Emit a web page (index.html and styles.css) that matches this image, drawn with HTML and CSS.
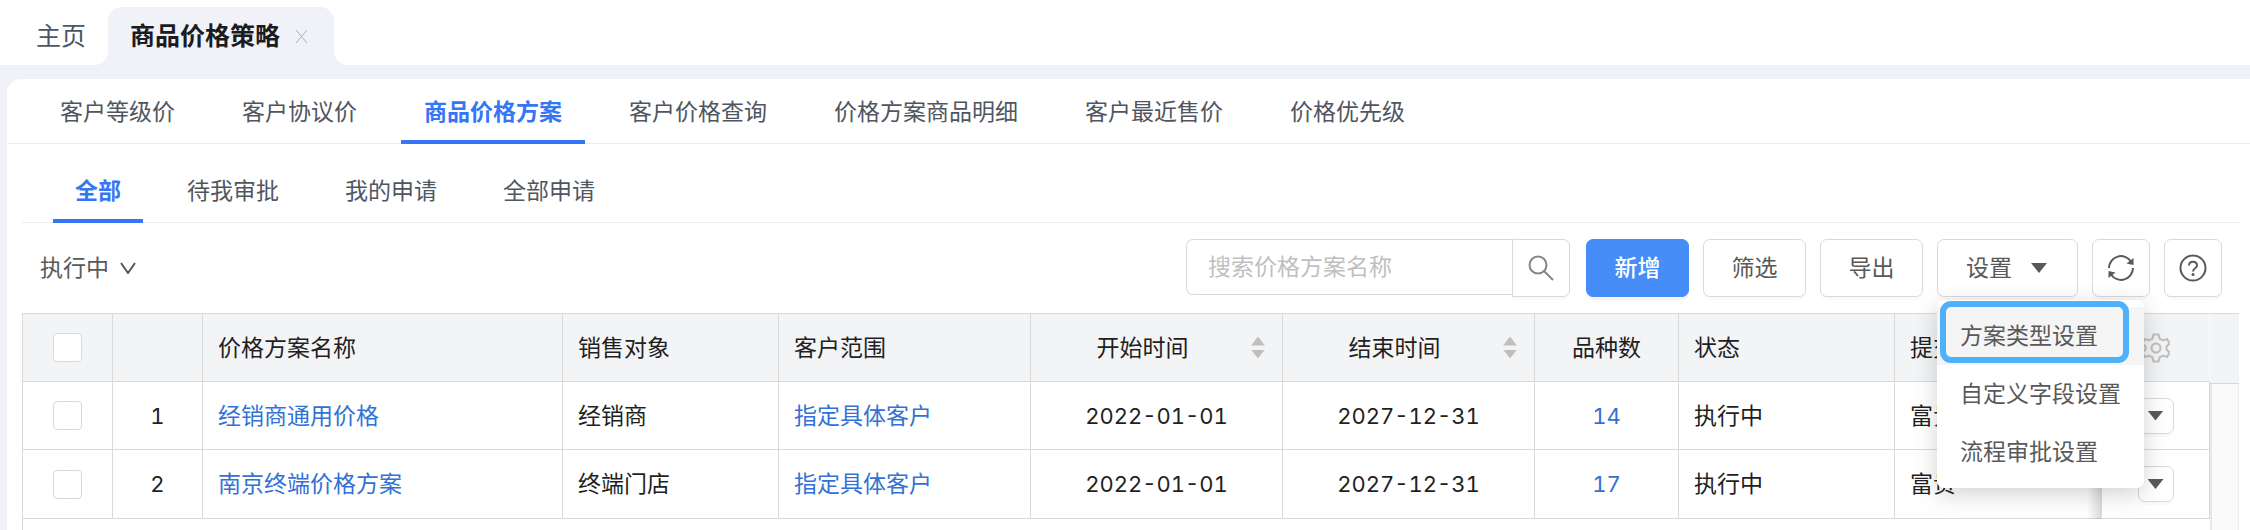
FILE: index.html
```
<!DOCTYPE html>
<html lang="zh-CN">
<head>
    <meta charset="UTF-8">
    <meta name="viewport" content="width=device-width, initial-scale=1.0">
    <title>商品价格策略</title>
    <link rel="stylesheet" href="styles.css">
</head>
<body>
    <header class="page-tabs">
        <a href="#" class="page-tab">主页</a>
        <div class="page-tab active">
            <a href="#">商品价格策略</a>
            <button type="button" class="tab-close" aria-label="关闭">
                <svg width="13" height="15" viewBox="0 0 13 15"><path d="M1 1l11 13M12 1L1 14"/></svg>
            </button>
        </div>
    </header>

    <main class="panel">
        <nav class="nav-tabs">
            <a href="#">客户等级价</a>
            <a href="#">客户协议价</a>
            <a href="#" class="active">商品价格方案</a>
            <a href="#">客户价格查询</a>
            <a href="#">价格方案商品明细</a>
            <a href="#">客户最近售价</a>
            <a href="#">价格优先级</a>
        </nav>

        <div class="content">
            <nav class="sub-tabs">
                <a href="#" class="active">全部</a>
                <a href="#">待我审批</a>
                <a href="#">我的申请</a>
                <a href="#">全部申请</a>
            </nav>

            <div class="toolbar">
                <button type="button" class="status-filter">
                    执行中
                    <svg width="16" height="12" viewBox="0 0 16 12"><path d="M1 1l7 10 7-10"/></svg>
                </button>

                <div class="actions">
                    <form class="search">
                        <input type="text" placeholder="搜索价格方案名称" aria-label="搜索价格方案名称">
                        <button type="button" aria-label="搜索">
                            <svg width="26" height="26" viewBox="0 0 26 26"><circle cx="10" cy="10" r="8.5"/><path d="M16 16l9 9"/></svg>
                        </button>
                    </form>
                    <button type="button" class="btn primary">新增</button>
                    <button type="button" class="btn">筛选</button>
                    <button type="button" class="btn">导出</button>
                    <div class="dropdown">
                        <button type="button" class="btn" aria-expanded="true">设置 <span class="caret"></span></button>
                        <ul class="menu">
                            <li class="current"><a href="#">方案类型设置</a></li>
                            <li><a href="#">自定义字段设置</a></li>
                            <li><a href="#">流程审批设置</a></li>
                        </ul>
                    </div>
                    <button type="button" class="btn icon" aria-label="刷新">
                        <svg width="28" height="28" viewBox="0 0 28 28">
                            <path d="M2 14A12 12 0 0 1 24 7.500M26 14A12 12 0 0 1 4 20.500"/>
                            <path class="solid" d="M26.500 4v7l-7-1.500zM1.500 24v-7l7 1.500z"/>
                        </svg>
                    </button>
                    <button type="button" class="btn icon" aria-label="帮助">
                        <svg width="28" height="28" viewBox="0 0 28 28">
                            <circle cx="14" cy="14" r="12.500"/>
                            <path d="M10 11.500c0-5 8-5 8 0 0 3-4 2.500-4 6"/>
                            <circle class="solid" cx="14" cy="20.500" r="1.500"/>
                        </svg>
                    </button>
                </div>
            </div>

            <div class="table-wrap">
                <table>
                    <colgroup>
                        <col class="w-check">
                        <col class="w-index">
                        <col class="w-name">
                        <col class="w-target">
                        <col class="w-date">
                        <col class="w-date">
                        <col class="w-date">
                        <col class="w-count">
                        <col class="w-status">
                        <col>
                        <col class="w-action">
                    </colgroup>
                    <thead>
                        <tr>
                            <th class="center"><input type="checkbox" aria-label="全选"></th>
                            <th></th>
                            <th>价格方案名称</th>
                            <th>销售对象</th>
                            <th>客户范围</th>
                            <th><div class="sortable"><span>开始时间</span><i class="sorter"></i></div></th>
                            <th><div class="sortable"><span>结束时间</span><i class="sorter"></i></div></th>
                            <th class="center">品种数</th>
                            <th>状态</th>
                            <th>提交人</th>
                            <th class="center fixed">
                                <svg class="gear" width="28" height="30" viewBox="0 0 28 30">
                                    <path d="M11.500 1.500h5l1 4 3.500 2 4-1.500 2.500 4.500-3 3v3l3 3-2.500 4.500-4-1.500-3.500 2-1 4h-5l-1-4-3.500-2-4 1.500-2.500-4.500 3-3v-3l-3-3L3 6l4 1.500 3.500-2z"/>
                                    <circle cx="14" cy="15" r="4.500"/>
                                </svg>
                            </th>
                        </tr>
                    </thead>
                    <tbody>
                        <tr>
                            <td class="center"><input type="checkbox" aria-label="选择第1行"></td>
                            <td class="center num">1</td>
                            <td><a href="#">经销商通用价格</a></td>
                            <td>经销商</td>
                            <td><a href="#">指定具体客户</a></td>
                            <td class="center num">2022-01-01</td>
                            <td class="center num">2027-12-31</td>
                            <td class="center num"><a href="#">14</a></td>
                            <td>执行中</td>
                            <td>富贵</td>
                            <td class="center fixed"><button type="button" class="row-btn" aria-label="操作"><span class="caret"></span></button></td>
                        </tr>
                        <tr>
                            <td class="center"><input type="checkbox" aria-label="选择第2行"></td>
                            <td class="center num">2</td>
                            <td><a href="#">南京终端价格方案</a></td>
                            <td>终端门店</td>
                            <td><a href="#">指定具体客户</a></td>
                            <td class="center num">2022-01-01</td>
                            <td class="center num">2027-12-31</td>
                            <td class="center num"><a href="#">17</a></td>
                            <td>执行中</td>
                            <td>富贵</td>
                            <td class="center fixed"><button type="button" class="row-btn" aria-label="操作"><span class="caret"></span></button></td>
                        </tr>
                    </tbody>
                </table>
                <div class="gutter"></div>
            </div>
        </div>
    </main>
</body>
</html>
```
FILE: styles.css
```
* {
    margin: 0;
    padding: 0;
    box-sizing: border-box;
}

body {
    min-height: 100vh;
    display: flex;
    flex-direction: column;
    background: #f1f2f7;
    color: #1f1f1f;
    font-family: Inter, "Noto Sans CJK SC", sans-serif;
    font-size: 23px;
    line-height: 34px;
}

a {
    color: inherit;
    text-decoration: none;
}

button,
input {
    font: inherit;
    color: inherit;
}

button {
    background: none;
    border: none;
    cursor: pointer;
}

svg {
    display: block;
    fill: none;
    stroke: currentColor;
    stroke-width: 2;
}

svg .solid {
    fill: currentColor;
    stroke: none;
}

/* Opened pages */
.page-tabs {
    display: flex;
    padding: 7px 14px 0;
    background: #fff;
    font-size: 25px;
    color: #4e5569;
}

.page-tab {
    display: flex;
    align-items: center;
    height: 58px;
    padding: 0 22px;
}

.page-tab.active {
    position: relative;
    gap: 15px;
    padding-right: 26px;
    border-radius: 14px 14px 0 0;
    background: #f1f2f7;
    color: #1b1c21;
    font-weight: bold;
}

.page-tab.active::before,
.page-tab.active::after {
    content: '';
    position: absolute;
    bottom: 0;
    width: 14px;
    height: 14px;
}

.page-tab.active::before {
    right: 100%;
    background: radial-gradient(circle at 0 0, #fff 14px, #f1f2f7 14px);
}

.page-tab.active::after {
    left: 100%;
    background: radial-gradient(circle at 100% 0, #fff 14px, #f1f2f7 14px);
}

.tab-close {
    color: #a9aeb8;
}

.tab-close svg {
    stroke-width: 1;
}

.panel {
    flex: 1;
    display: flex;
    flex-direction: column;
    margin: 14px 0 0 7px;
    border-radius: 14px 0 0 0;
    background: #fff;
}

.nav-tabs,
.sub-tabs {
    display: flex;
    border-bottom: 1px solid #ededef;
    color: #50565f;
}

.nav-tabs {
    gap: 21px;
    padding: 0 30px;
}

.sub-tabs {
    gap: 22px;
    padding: 14px 31px 0;
}

.nav-tabs a,
.sub-tabs a {
    height: 65px;
    margin-bottom: -1px;
    padding: 16px 23px 0;
    border-bottom: 4px solid transparent;
}

.sub-tabs a {
    padding: 16px 22px 0;
}

.nav-tabs a.active,
.sub-tabs a.active {
    border-color: #3476f6;
    color: #3476f6;
    font-weight: bold;
}

.content {
    flex: 1;
    display: flex;
    flex-direction: column;
    padding: 0 11px 0 15px;
}

/* Toolbar */
.toolbar {
    display: flex;
    align-items: center;
    justify-content: space-between;
    padding: 16px 17px 16px 18px;
    color: #595959;
}

.status-filter {
    display: flex;
    align-items: center;
    gap: 11px;
}

.actions {
    display: flex;
    gap: 14px;
}

.search {
    display: flex;
    align-items: flex-start;
    margin-right: 2px;
}

.search input {
    width: 326px;
    height: 56px;
    padding: 0 21px;
    border: 1px solid #d9d9d9;
    border-right: none;
    border-radius: 7px 0 0 7px;
    outline: none;
}

.search input::placeholder {
    color: #bfbfbf;
}

.search button {
    display: flex;
    align-items: center;
    justify-content: center;
    width: 58px;
    height: 58px;
    border: 1px solid #d9d9d9;
    border-radius: 0 7px 7px 0;
    box-shadow: 0 3px 0 rgba(0, 0, 0, 0.02);
    color: #858585;
}

.btn {
    display: flex;
    align-items: center;
    justify-content: center;
    min-width: 103px;
    height: 58px;
    border: 1px solid #d9d9d9;
    border-radius: 7px;
    background: #fff;
    box-shadow: 0 3px 0 rgba(0, 0, 0, 0.02);
}

.btn.primary {
    border-color: #468df7;
    background: #468df7;
    color: #fff;
    font-weight: 500;
    box-shadow: 0 3px 0 rgba(0, 0, 0, 0.04);
}

.btn.icon {
    min-width: 58px;
}

.caret {
    display: block;
    width: 16px;
    height: 10px;
    background: #595959;
    clip-path: polygon(0 0, 100% 0, 50% 100%);
}

.dropdown {
    position: relative;
}

.dropdown .btn {
    gap: 19px;
    padding: 0 30px 0 28px;
}

.menu {
    position: absolute;
    top: 61px;
    left: 0;
    z-index: 10;
    padding: 7px 0;
    border-radius: 7px;
    background: #fff;
    box-shadow: 0 6px 24px rgba(0, 0, 0, 0.18);
    list-style: none;
    white-space: nowrap;
}

.menu a {
    display: block;
    padding: 12px 23px;
}

.menu .current {
    position: relative;
    background: #f5f5f5;
}

.menu .current::after {
    content: '';
    position: absolute;
    inset: -6px 15px 2px 3px;
    border: 6px solid #50b0f9;
    border-radius: 11px;
}

/* Table */
.table-wrap {
    flex: 1;
    display: flex;
    align-items: flex-start;
    border-left: 1px solid #d9d9d9;
}

table {
    flex: 1;
    width: 100%;
    table-layout: fixed;
    border-collapse: separate;
    border-spacing: 0;
}

.w-check,
.w-index { width: 90px; }
.w-name { width: 360px; }
.w-target,
.w-status { width: 216px; }
.w-date { width: 252px; }
.w-count { width: 144px; }
.w-action { width: 108px; }

th,
td {
    height: 68px;
    padding: 0 15px;
    border-right: 1px solid #d9d9d9;
    border-bottom: 1px solid #d9d9d9;
    text-align: left;
    font-weight: normal;
    white-space: nowrap;
}

th,
tr:last-child td {
    height: 69px;
}

th {
    border-top: 1px solid #d9d9d9;
    background: #f3f4f6;
}

th:last-child {
    border-right-color: #f9f9fa;
}

td a {
    color: #3272d4;
}

th.center,
td.center {
    text-align: center;
}

.num {
    font-size: 22px;
    font-variant-numeric: tabular-nums;
}

.sortable {
    display: flex;
    align-items: center;
    gap: 12px;
    padding-right: 2px;
}

.sortable span {
    flex: 1;
    text-align: center;
}

.sorter::before,
.sorter::after {
    content: '';
    display: block;
    width: 14px;
    height: 9px;
    background: #bfbfbf;
    clip-path: polygon(50% 0, 100% 100%, 0 100%);
}

.sorter::after {
    margin-top: 4px;
    clip-path: polygon(0 0, 100% 0, 50% 100%);
}

input[type="checkbox"] {
    display: block;
    width: 29px;
    height: 29px;
    margin: 0 auto;
    appearance: none;
    border: 1px solid #d9d9d9;
    border-radius: 4px;
    background: #fff;
}

.fixed {
    position: relative;
}

td.fixed::before {
    content: '';
    position: absolute;
    top: 0;
    right: 100%;
    bottom: -1px;
    width: 14px;
    border-right: 1px solid #d9d9d9;
    background: linear-gradient(to left, rgba(0, 0, 0, 0.14), transparent);
}

.gear {
    margin: 0 auto;
    color: #bfbfbf;
}

.row-btn {
    display: flex;
    align-items: center;
    justify-content: center;
    width: 36px;
    height: 36px;
    margin: 0 auto;
    border: 1px solid #d9d9d9;
    border-radius: 7px;
    box-shadow: 0 3px 0 rgba(0, 0, 0, 0.02);
}

/* Scrollbar column at the right of the table */
.gutter {
    align-self: stretch;
    display: flex;
    flex-direction: column;
    width: 29px;
}

.gutter::before {
    content: '';
    height: 69px;
    border-top: 1px solid #d9d9d9;
    border-bottom: 1px solid #d9d9d9;
    background: #f3f4f6;
}

.gutter::after {
    content: '';
    flex: 1;
    border-left: 2px solid #e8e8e8;
    border-right: 1px solid #ededed;
    background: #fafafa;
}
```
